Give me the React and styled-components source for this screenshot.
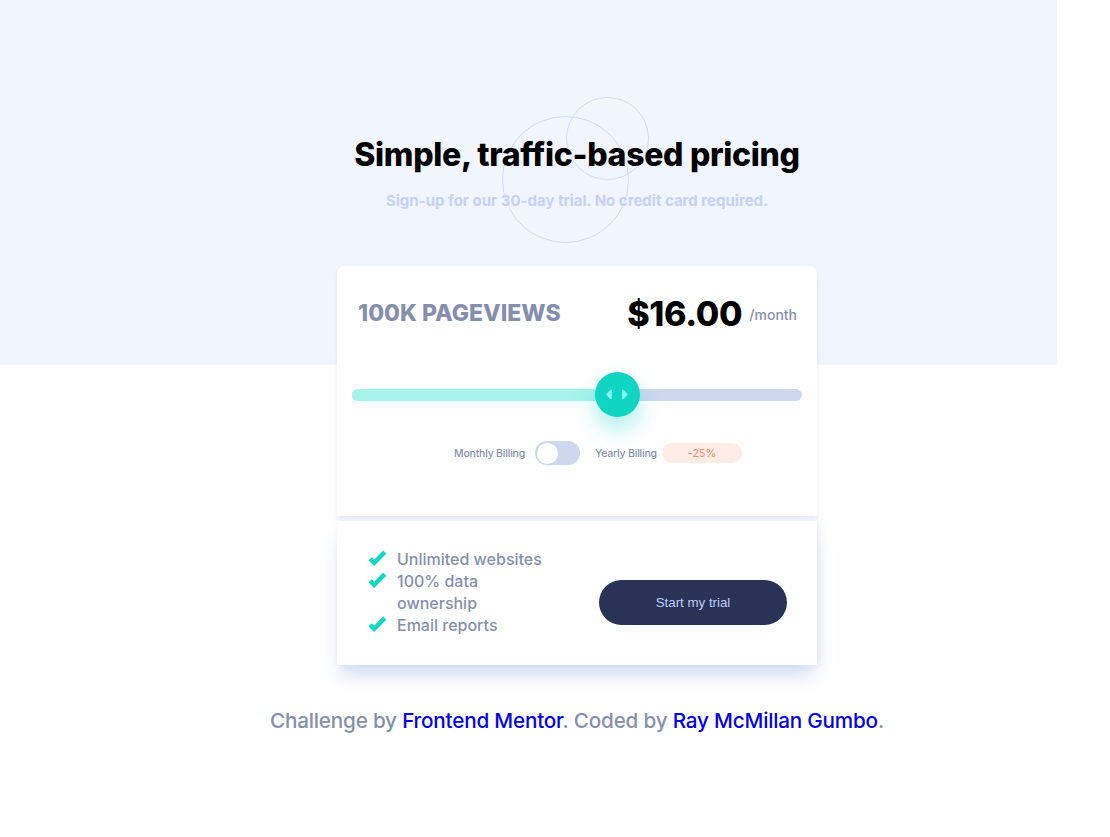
import React from "react";
import styled, { createGlobalStyle } from "styled-components";

const Global = createGlobalStyle`
  html, body { margin: 0; padding: 0; }
  body {
    font-family: "Inter", "Noto Sans", sans-serif;
    background: #ffffff;
  }
  * { box-sizing: border-box; }
`;

const Page = styled.div`
  width: 1110px;
  min-height: 837px;
  background: linear-gradient(#f1f5fe, #f1f5fe) no-repeat 0 0 / 1057px 365px;
  padding-left: 44px;
  display: flex;
  flex-direction: column;
  align-items: center;
`;

const Hero = styled.header`
  position: relative;
  padding-top: 135px;
  display: flex;
  flex-direction: column;
  align-items: center;
`;

const Circle = styled.div`
  position: absolute;
  border: 1px solid #d3dbf3;
  border-radius: 50%;
  width: ${(p) => p.$size}px;
  height: ${(p) => p.$size}px;
  left: calc(50% + ${(p) => p.$dx}px);
  top: ${(p) => p.$y}px;
  pointer-events: none;
`;

const Title = styled.h1`
  position: relative;
  margin: 0;
  font-size: 32px;
  line-height: 40px;
  font-weight: 800;
  color: #000;
  letter-spacing: -0.3px;
`;

const Subtitle = styled.p`
  position: relative;
  margin: 16px 0 0;
  font-size: 15px;
  line-height: 20px;
  font-weight: 700;
  color: #c6d1f8;
`;

const Card = styled.section`
  width: 480px;
  background: #fff;
  border-radius: 8px 8px 0 0;
  margin-top: 55px;
  padding: 22px 20px 51px;
  box-shadow: 0 3px 4px rgba(180, 195, 235, 0.35);
`;

const TopRow = styled.div`
  display: flex;
  align-items: center;
  justify-content: space-between;
  padding-left: 1px;
  height: 50px;
`;

const Views = styled.div`
  font-size: 23px;
  font-weight: 800;
  color: #858fad;
  letter-spacing: 0;
`;

const PriceWrap = styled.div`
  display: flex;
  align-items: center;
  gap: 7px;
`;

const Price = styled.span`
  font-size: 34px;
  font-weight: 800;
  color: #000;
  letter-spacing: -0.3px;
`;

const Per = styled.span`
  font-size: 14px;
  font-weight: 500;
  color: #858fad;
  padding-top: 3px;
`;

const SliderArea = styled.div`
  margin: 34px -5px 0;
  height: 45px;
  display: flex;
  align-items: center;
`;

const Track = styled.div`
  position: relative;
  width: 100%;
  height: 12px;
  border-radius: 6px;
  background: #cdd7ee;
`;

const Fill = styled.div`
  height: 100%;
  border-radius: 6px 0 0 6px;
  background: #a5f3eb;
`;

const Thumb = styled.div`
  position: absolute;
  top: 50%;
  width: 45px;
  height: 45px;
  margin-left: -22.5px;
  margin-top: -22.5px;
  border-radius: 50%;
  background: #10d5c2;
  box-shadow: 0 12px 22px rgba(16, 213, 194, 0.35);
  display: flex;
  align-items: center;
  justify-content: center;
`;

const ToggleRow = styled.div`
  margin-top: 24px;
  display: flex;
  align-items: center;
  padding-left: 97px;
  font-size: 10.5px;
  color: #858fad;
  height: 24px;
`;

const Label = styled.span`
  font-weight: 500;
  letter-spacing: -0.2px;
`;

const Switch = styled.div`
  width: 45px;
  height: 24px;
  border-radius: 12px;
  background: #cdd7ee;
  margin: 0 15px 0 10px;
  padding: 2px;
  display: flex;
  align-items: center;
`;

const Knob = styled.div`
  width: 21px;
  height: 21px;
  border-radius: 50%;
  background: #fff;
`;

const Badge = styled.span`
  margin-left: 5px;
  width: 80px;
  height: 20px;
  border-radius: 10px;
  background: #feece7;
  color: #ff8c66;
  font-size: 11px;
  display: flex;
  align-items: center;
  justify-content: center;
`;

const Bottom = styled.section`
  width: 480px;
  margin-top: 5px;
  background: #fff;
  padding: 27px 30px 29px 31px;
  display: flex;
  align-items: center;
  justify-content: space-between;
  box-shadow: 0 14px 18px -4px rgba(180, 195, 235, 0.6), 3px 0 6px rgba(200, 210, 240, 0.3);
`;

const List = styled.ul`
  list-style: none;
  margin: 0;
  padding: 0;
  width: 180px;
`;

const Item = styled.li`
  display: flex;
  align-items: flex-start;
  gap: 10px;
  font-size: 16px;
  line-height: 22px;
  font-weight: 500;
  color: #858fad;
  svg { flex: none; margin-top: 2px; }
`;

const Button = styled.button`
  margin-top: 21px;
  width: 188px;
  height: 45px;
  border: none;
  border-radius: 23px;
  background: #293356;
  color: #bdccff;
  font-family: "Liberation Sans", Arial, sans-serif;
  font-size: 13.3px;
`;

const Footer = styled.footer`
  margin-top: 43px;
  font-size: 20.7px;
  line-height: 25px;
  color: #858fad;
  font-weight: 500;
  letter-spacing: -0.2px;
  a { color: #0000ee; text-decoration: none; }
`;

const Check = () => (
  <svg width="19" height="17" viewBox="0 0 9 8">
    <path fill="none" stroke="#10D8C4" strokeWidth="2.1" d="M1 4.134l1.907 1.908L7.949 1" />
  </svg>
);

const SliderIcon = () => (
  <svg width="22" height="13" viewBox="0 0 22 13">
    <path
      fill="#80FFF3"
      d="M16 2.558v7.884a1 1 0 001.735.679l3.639-3.943a1 1 0 000-1.356l-3.64-3.943A1 1 0 0016 2.558zM6 2.558v7.884a1 1 0 01-1.735.679L.626 7.178a1 1 0 010-1.356l3.64-3.943A1 1 0 016 2.558z"
    />
  </svg>
);

export default function App() {
  const pct = 58.9;
  return (
    <>
      <Global />
      <Page>
        <Hero>
          <Circle $size={127} $dx={-75} $y={116} />
          <Circle $size={83} $dx={-11} $y={97} />
          <Title>Simple, traffic-based pricing</Title>
          <Subtitle>Sign-up for our 30-day trial. No credit card required.</Subtitle>
        </Hero>
        <Card>
          <TopRow>
            <Views>100K PAGEVIEWS</Views>
            <PriceWrap>
              <Price>$16.00</Price>
              <Per>/month</Per>
            </PriceWrap>
          </TopRow>
          <SliderArea>
            <Track>
              <Fill style={{ width: `${pct}%` }} />
              <Thumb style={{ left: `${pct}%` }}>
                <SliderIcon />
              </Thumb>
            </Track>
          </SliderArea>
          <ToggleRow>
            <Label>Monthly Billing</Label>
            <Switch>
              <Knob />
            </Switch>
            <Label>Yearly Billing</Label>
            <Badge>-25%</Badge>
          </ToggleRow>
        </Card>
        <Bottom>
          <List>
            <Item><Check />Unlimited websites</Item>
            <Item><Check />100% data ownership</Item>
            <Item><Check />Email reports</Item>
          </List>
          <Button>Start my trial</Button>
        </Bottom>
        <Footer>
          Challenge by <a href="#">Frontend Mentor</a>. Coded by <a href="#">Ray McMillan Gumbo</a>.
        </Footer>
      </Page>
    </>
  );
}
